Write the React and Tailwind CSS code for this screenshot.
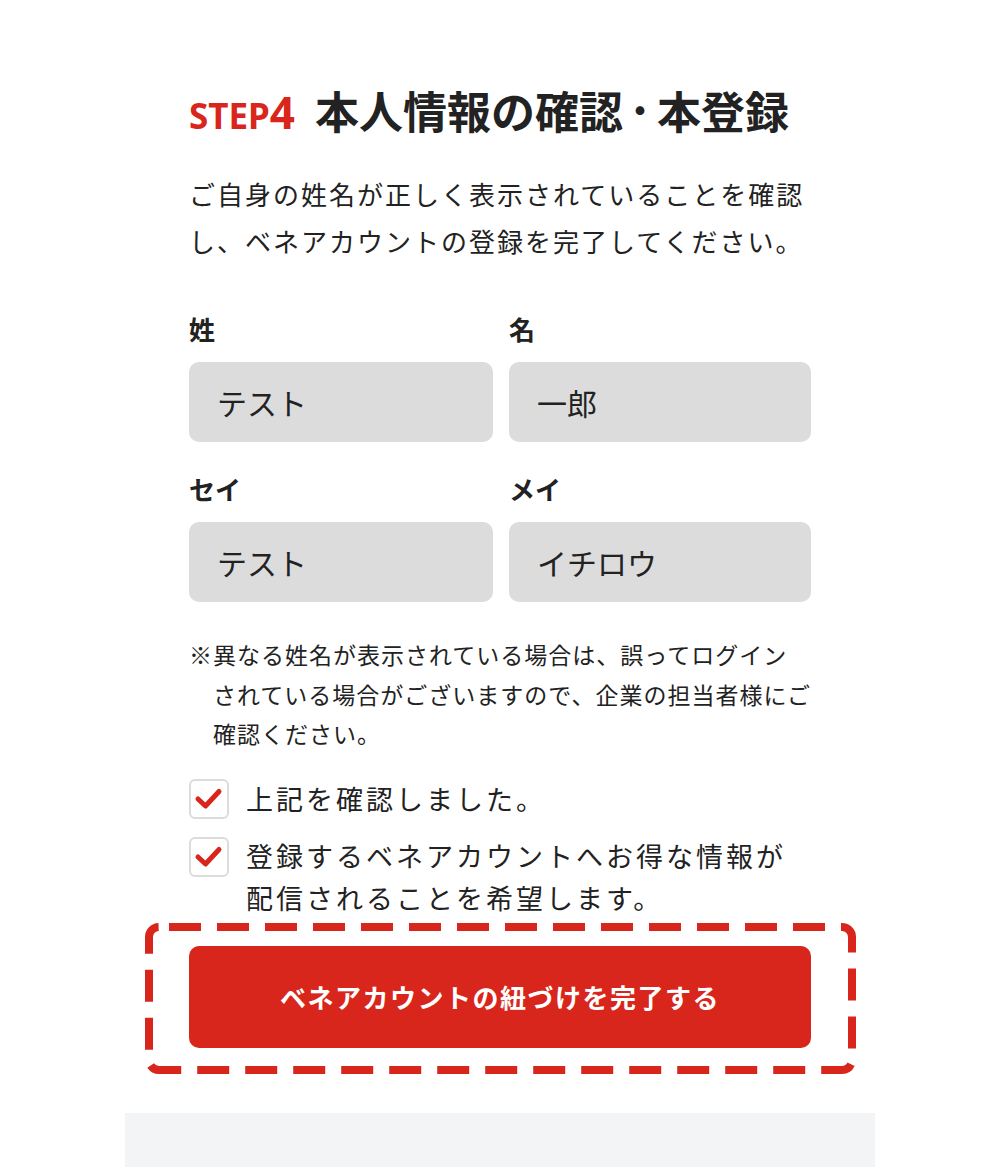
import React from "react";

const JP = { fontFamily: '"Noto Sans CJK JP", "Noto Sans", sans-serif' };

function Check() {
  return (
    <div className="flex h-[40px] w-[40px] shrink-0 items-center justify-center rounded-[6px] border-2 border-[#dcdcdc] bg-white">
      <svg width="30" height="26" viewBox="0 0 30 26">
        <path d="M4 13 L11.5 20 L25 5.5" fill="none" stroke="#d9261c" strokeWidth="5" strokeLinecap="round" strokeLinejoin="round" />
      </svg>
    </div>
  );
}

function Field({ label, value }) {
  return (
    <div className="flex flex-col">
      <div className="text-[26px] font-bold leading-[34px] text-[#222]">{label}</div>
      <div className="mt-[16px] flex h-[80px] items-center rounded-[10px] bg-[#dcdcdc] pl-[28px] text-[30px] text-[#222]">
        {value}
      </div>
    </div>
  );
}

export default function App() {
  return (
    <div className="flex min-h-[1167px] justify-center bg-white" style={JP}>
      <div className="flex w-[750px] flex-col">
        <div className="flex flex-col px-[64px] pt-[88px] pb-[39px]">
          <h1 className="flex items-baseline whitespace-nowrap">
            <span className="text-[35px] font-bold leading-none text-[#d9261c]" style={{ fontFamily: '"Noto Sans", sans-serif' }}>
              STEP<span className="text-[44px]">4</span>
            </span>
            <span className="ml-[20px] text-[44px] font-bold leading-none text-[#222]">
              本人情報の確認<span className="align-[5px] text-[34px]">・</span>本登録
            </span>
          </h1>
          <p className="mt-[36px] text-[26px] leading-[47px] tracking-[2px] text-[#222]">
            ご自身の姓名が正しく表示されていることを確認し、ベネアカウントの登録を完了してください。
          </p>
          <div className="mt-[48px] grid grid-cols-[304px_302px] gap-x-[16px] gap-y-[30px]">
            <Field label="姓" value="テスト" />
            <Field label="名" value="一郎" />
            <Field label="セイ" value="テスト" />
            <Field label="メイ" value="イチロウ" />
          </div>
          <p className="mt-[33px] pl-[24px] -indent-[24px] text-[23px] leading-[39.5px] tracking-[1px] whitespace-nowrap text-[#222]">
            ※異なる姓名が表示されている場合は、誤ってログイン
            <br />
            されている場合がございますので、企業の担当者様にご
            <br />
            確認ください。
          </p>
          <div className="mt-[25px] flex flex-col gap-[18px]">
            <label className="flex items-start gap-[17px]">
              <Check />
              <span className="text-[27px] leading-[40px] tracking-[3px] text-[#222]">上記を確認しました。</span>
            </label>
            <label className="flex items-start gap-[17px]">
              <Check />
              <span className="-mt-[2px] text-[27px] leading-[42px] tracking-[3px] text-[#222]">
                登録するベネアカウントへお得な情報が配信されることを希望します。
              </span>
            </label>
          </div>
          <div className="relative mx-[-44px] mt-[4px] px-[44px] pt-[23px] pb-[26px]">
            <svg className="pointer-events-none absolute inset-0" width="711" height="151" viewBox="0 0 711 151">
              <rect x="4" y="4" width="703" height="143" rx="10" ry="10" fill="none" stroke="#d9261c" strokeWidth="8" strokeDasharray="32 16" strokeDashoffset="-10" />
            </svg>
            <button className="relative flex h-[102px] w-full items-center justify-center rounded-[10px] bg-[#d9261c] text-[26px] font-bold tracking-[1.5px] text-white">
              ベネアカウントの紐づけを完了する
            </button>
          </div>
        </div>
        <div className="h-[56px] bg-[#f3f4f6]" />
      </div>
    </div>
  );
}
